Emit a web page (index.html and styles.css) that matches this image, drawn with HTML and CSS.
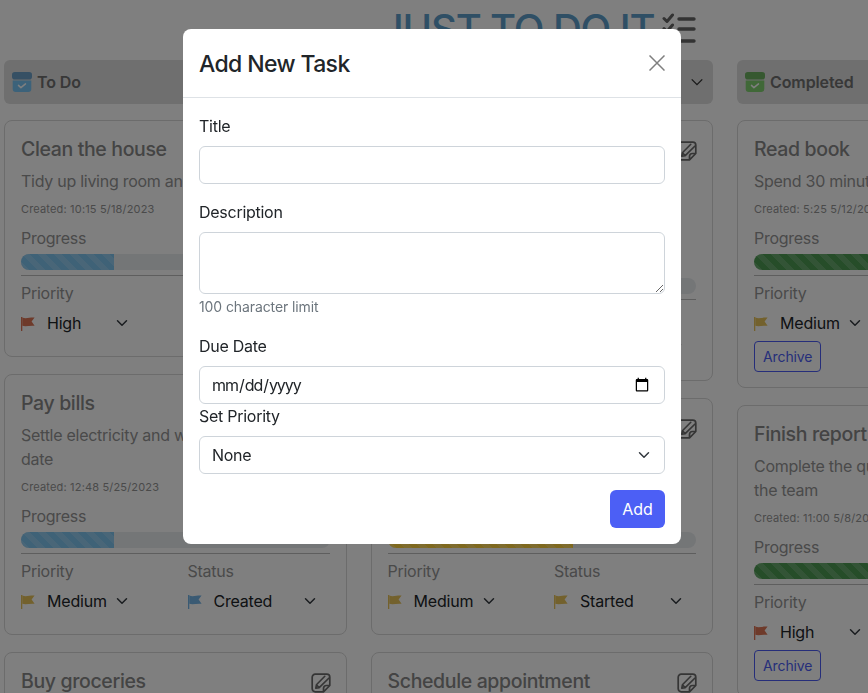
FILE: index.html
```html
<!DOCTYPE html>
<html lang="en">
<head>
<meta charset="utf-8">
<title>Just To Do It</title>
<link rel="stylesheet" href="styles.css">
</head>
<body>
<svg class="sprites" aria-hidden="true">
  <symbol id="flag" viewBox="0 0 14 14"><path d="M0 0h1.300v14H0z"/><path d="M1.300 .6C5 2 9 .2 13.600 .6L10.600 4.400l3 4.400C9 8.200 5 10 1.300 8.800z"/></symbol>
  <symbol id="edit" viewBox="0 0 20 20"><path fill="none" stroke="currentColor" stroke-width="1.700" stroke-linejoin="round" d="M12.500 18.800H4.200a3 3 0 0 1-3-3V4.200a3 3 0 0 1 3-3h11.600a3 3 0 0 1 3 3v8.300zM12.500 18.800v-3.300a3 3 0 0 1 3-3h3.300"/><path fill="none" stroke="currentColor" stroke-width="1.600" stroke-linecap="round" stroke-linejoin="round" d="M4.800 15.200l.6-3.400L13.800 3.300M4.800 15.200l3.400-.6L18 5M5.400 11.800l2.800 2.800"/></symbol>
  <symbol id="archive" viewBox="0 0 20 20"><rect x="0" y="0" width="20" height="7.500" rx="2.800" fill="currentColor"/><path d="M.7 8.500h18.600V17a3 3 0 0 1-3 3H3.700a3 3 0 0 1-3-3z"/><path fill="none" stroke="#fff" stroke-width="1.500" stroke-linecap="round" stroke-linejoin="round" d="M6.500 13.400l2.400 2.300 4.600-3.800"/></symbol>
</svg>

<main class="page">
  <header class="brand">
    <h1 class="brand-title">JUST TO DO IT</h1>
    <svg class="brand-icon" viewBox="0 0 34 30" aria-hidden="true"><path fill="none" stroke="currentColor" stroke-width="3" stroke-linecap="round" stroke-linejoin="round" d="M2 5.500l3 3 5.500-6.500M2 15.500l3 3 5.500-6.500"/><path fill="none" stroke="currentColor" stroke-width="3.400" stroke-linecap="round" d="M17 6h15M17 16h15M4 28h28"/></svg>
  </header>

  <div class="board">
    <section class="column">
      <h2 class="column-head"><svg class="head-icon icon-blue"><use href="#archive"/></svg>To Do<svg class="head-chevron" viewBox="0 0 16 16"><path d="M2 5l6 6 6-6"/></svg></h2>

      <article class="card">
        <div class="card-head"><h3 class="card-title">Clean the house</h3><svg class="edit"><use href="#edit"/></svg></div>
        <p class="card-text">Tidy up living room and kitchen</p>
        <p class="card-date">Created: 10:15 5/18/2023</p>
        <div class="progress-label">Progress</div>
        <div class="track"><div class="fill fill-blue" style="width:30%"></div></div>
        <div class="meta">
          <div class="meta-cell"><span class="meta-label">Priority</span>
            <div class="pick"><svg class="flag flag-high"><use href="#flag"/></svg><select class="pick-select"><option>None</option><option>Low</option><option>Medium</option><option selected>High</option></select></div></div>
          <div class="meta-cell"><span class="meta-label">Status</span>
            <div class="pick"><svg class="flag flag-blue"><use href="#flag"/></svg><select class="pick-select"><option selected>Created</option><option>Started</option><option>Completed</option></select></div></div>
        </div>
      </article>

      <article class="card">
        <div class="card-head"><h3 class="card-title">Pay bills</h3><svg class="edit"><use href="#edit"/></svg></div>
        <p class="card-text">Settle electricity and water bills before date</p>
        <p class="card-date">Created: 12:48 5/25/2023</p>
        <div class="progress-label">Progress</div>
        <div class="track"><div class="fill fill-blue" style="width:30%"></div></div>
        <div class="meta">
          <div class="meta-cell"><span class="meta-label">Priority</span>
            <div class="pick"><svg class="flag flag-med"><use href="#flag"/></svg><select class="pick-select"><option>None</option><option>Low</option><option selected>Medium</option><option>High</option></select></div></div>
          <div class="meta-cell"><span class="meta-label">Status</span>
            <div class="pick"><svg class="flag flag-blue"><use href="#flag"/></svg><select class="pick-select"><option selected>Created</option><option>Started</option><option>Completed</option></select></div></div>
        </div>
      </article>

      <article class="card">
        <div class="card-head"><h3 class="card-title">Buy groceries</h3><svg class="edit"><use href="#edit"/></svg></div>
      </article>
    </section>

    <section class="column">
      <h2 class="column-head"><svg class="head-icon icon-yellow"><use href="#archive"/></svg>In Progress<svg class="head-chevron" viewBox="0 0 16 16"><path d="M2 5l6 6 6-6"/></svg></h2>

      <article class="card">
        <div class="card-head"><h3 class="card-title">Walk the dog</h3><svg class="edit"><use href="#edit"/></svg></div>
        <p class="card-text">Take the dog on a long walk around the neighbourhood after work</p>
        <p class="card-date">Created: 9:30 5/20/2023</p>
        <div class="progress-label">Progress</div>
        <div class="track"><div class="fill fill-yellow" style="width:60%"></div></div>
        <div class="meta">
          <div class="meta-cell"><span class="meta-label">Priority</span>
            <div class="pick"><svg class="flag flag-med"><use href="#flag"/></svg><select class="pick-select"><option>None</option><option>Low</option><option selected>Medium</option><option>High</option></select></div></div>
          <div class="meta-cell"><span class="meta-label">Status</span>
            <div class="pick"><svg class="flag flag-med"><use href="#flag"/></svg><select class="pick-select"><option>Created</option><option selected>Started</option><option>Completed</option></select></div></div>
        </div>
      </article>

      <article class="card">
        <div class="card-head"><h3 class="card-title">Clean the garage</h3><svg class="edit"><use href="#edit"/></svg></div>
        <p class="card-text">Sort the boxes in the garage</p>
        <p class="card-date">Created: 14:05 5/22/2023</p>
        <div class="progress-label">Progress</div>
        <div class="track"><div class="fill fill-yellow" style="width:60%"></div></div>
        <div class="meta">
          <div class="meta-cell"><span class="meta-label">Priority</span>
            <div class="pick"><svg class="flag flag-med"><use href="#flag"/></svg><select class="pick-select"><option>None</option><option>Low</option><option selected>Medium</option><option>High</option></select></div></div>
          <div class="meta-cell"><span class="meta-label">Status</span>
            <div class="pick"><svg class="flag flag-med"><use href="#flag"/></svg><select class="pick-select"><option>Created</option><option selected>Started</option><option>Completed</option></select></div></div>
        </div>
      </article>

      <article class="card">
        <div class="card-head"><h3 class="card-title">Schedule appointment</h3><svg class="edit"><use href="#edit"/></svg></div>
      </article>
    </section>

    <section class="column">
      <h2 class="column-head"><svg class="head-icon icon-green"><use href="#archive"/></svg>Completed<svg class="head-chevron" viewBox="0 0 16 16"><path d="M2 5l6 6 6-6"/></svg></h2>

      <article class="card">
        <div class="card-head"><h3 class="card-title">Read book</h3><svg class="edit"><use href="#edit"/></svg></div>
        <p class="card-text">Spend 30 minutes reading a book</p>
        <p class="card-date">Created: 5:25 5/12/2023</p>
        <div class="progress-label">Progress</div>
        <div class="track"><div class="fill fill-green" style="width:100%"></div></div>
        <div class="meta">
          <div class="meta-cell"><span class="meta-label">Priority</span>
            <div class="pick"><svg class="flag flag-med"><use href="#flag"/></svg><select class="pick-select"><option>None</option><option>Low</option><option selected>Medium</option><option>High</option></select></div></div>
          <div class="meta-cell"><span class="meta-label">Status</span>
            <div class="pick"><svg class="flag flag-green"><use href="#flag"/></svg><select class="pick-select"><option>Created</option><option>Started</option><option selected>Completed</option></select></div></div>
        </div>
        <button class="archive" type="button">Archive</button>
      </article>

      <article class="card">
        <div class="card-head"><h3 class="card-title">Finish report</h3><svg class="edit"><use href="#edit"/></svg></div>
        <p class="card-text">Complete the quarterly report and send to the team</p>
        <p class="card-date">Created: 11:00 5/8/2023</p>
        <div class="progress-label">Progress</div>
        <div class="track"><div class="fill fill-green" style="width:100%"></div></div>
        <div class="meta">
          <div class="meta-cell"><span class="meta-label">Priority</span>
            <div class="pick"><svg class="flag flag-high"><use href="#flag"/></svg><select class="pick-select"><option>None</option><option>Low</option><option>Medium</option><option selected>High</option></select></div></div>
          <div class="meta-cell"><span class="meta-label">Status</span>
            <div class="pick"><svg class="flag flag-green"><use href="#flag"/></svg><select class="pick-select"><option>Created</option><option>Started</option><option selected>Completed</option></select></div></div>
        </div>
        <button class="archive" type="button">Archive</button>
      </article>
    </section>
  </div>
</main>

<div class="backdrop"></div>

<div class="modal" role="dialog" aria-modal="true" aria-labelledby="modal-title">
  <div class="modal-head">
    <h2 class="modal-title" id="modal-title">Add New Task</h2>
    <button class="close" type="button" aria-label="Close"><svg viewBox="0 0 16 16"><path d="M.5.5l15 15M15.500.5l-15 15"/></svg></button>
  </div>
  <form class="modal-body">
    <div class="field">
      <label class="field-label" for="t-title">Title</label>
      <input class="control" id="t-title" type="text">
    </div>
    <div class="field">
      <label class="field-label" for="t-desc">Description</label>
      <textarea class="control control-area" id="t-desc" rows="2"></textarea>
      <div class="hint">100 character limit</div>
    </div>
    <div class="field field-tight">
      <label class="field-label" for="t-due">Due Date</label>
      <input class="control control-date" id="t-due" type="date">
    </div>
    <div class="field">
      <label class="field-label" for="t-prio">Set Priority</label>
      <select class="control control-select" id="t-prio"><option>None</option><option>Low</option><option>Medium</option><option>High</option></select>
    </div>
    <div class="actions"><button class="add" type="button">Add</button></div>
  </form>
</div>
</body>
</html>
```

FILE: styles.css
```css
* { box-sizing: border-box; }

html, body {
  margin: 0;
  height: 693px;
  overflow: hidden;
  background: #fff;
  font-family: Inter, "Liberation Sans", sans-serif;
  font-size: 16px;
  line-height: 24px;
  letter-spacing: -.27px;
  color: #212529;
}

.sprites { display: none; }

.page { width: 868px; height: 693px; overflow: hidden; }

.brand {
  display: flex;
  justify-content: center;
  align-items: flex-start;
  gap: 8px;
  width: 1077px;
  height: 60px;
  padding-top: 5px;
  color: #5e9ecb;
}
.brand-title {
  margin: 0;
  font-size: 40px;
  line-height: 48px;
  font-weight: 500;
  letter-spacing: -1.150px;
  white-space: nowrap;
}
.brand-icon { width: 34px; height: 30px; margin-top: 8px; color: #666; flex: none; }

.board { display: flex; gap: 24px; padding-left: 4px; width: 1100px; }
.column { width: 342.500px; flex: none; }

.column-head {
  display: flex;
  align-items: center;
  height: 44px;
  margin: 0 0 16px;
  padding: 0 8px;
  border-radius: 6px;
  background: #dedede;
  font-size: 16px;
  font-weight: 600;
  letter-spacing: -.1px;
  color: #707070;
}
.head-icon { width: 20px; height: 20px; margin-right: 5px; flex: none; }
.head-chevron {
  width: 14px; height: 14px; margin-left: auto; margin-right: 1px;
  fill: none; stroke: #333; stroke-width: 1.600;
}
.icon-blue { fill: #78c4f4; color: #6ca0c8; }
.icon-yellow { fill: #ffdd60; color: #d8b850; }
.icon-green { fill: #80d070; color: #6cb060; }

.card {
  border: 1px solid #d8d8d8;
  border-radius: 8px;
  padding: 16px 16px 14px;
  margin-bottom: 17px;
}
.card-head { display: flex; justify-content: space-between; align-items: flex-start; }
.card-title { margin: 0 0 8px; font-size: 19.500px; line-height: 24px; font-weight: 500; letter-spacing: -.36px; color: #888; }
.edit { width: 20px; height: 20px; margin: 4px -1px 0 0; flex: none; color: #6a6a6a; }
.card-text { margin: 0 0 8px; color: #949494; }
.card-date { margin: 0 0 9px; font-size: 11px; line-height: 16px; color: #949494; letter-spacing: .17px; }
.progress-label { color: #949494; line-height: 24px; margin-bottom: 4px; }

.track { height: 16px; border-radius: 8px; background: #e9ecef; overflow: hidden; }
.fill {
  height: 100%;
  background-size: 16px 16px;
  background-image: linear-gradient(45deg, rgba(255,255,255,.15) 25%, transparent 25%, transparent 50%, rgba(255,255,255,.15) 50%, rgba(255,255,255,.15) 75%, transparent 75%, transparent);
}
.fill-blue { background-color: #7fc4ee; }
.fill-yellow { background-color: #ffd23f; }
.fill-green { background-color: #4c9a52; }

.meta {
  display: grid;
  grid-template-columns: 166.500px 1fr;
  border-top: 1px solid #bcbcbc;
  margin-top: 5px;
  padding-top: 5px;
}
.meta-cell { display: flex; flex-direction: column; align-items: flex-start; }
.meta-label { color: #949494; line-height: 24px; }

.pick { position: relative; display: flex; align-items: center; height: 38px; margin-top: -1px; }
.flag { position: absolute; left: 0; top: 12.500px; width: 14px; height: 14px; pointer-events: none; }
.flag-high { fill: #dc7454; }
.flag-med { fill: #e6c25a; }
.flag-blue { fill: #74b4e6; }
.flag-green { fill: #80d070; }

.pick-select {
  appearance: none;
  border: 0;
  background: transparent url("data:image/svg+xml,%3Csvg xmlns='http://www.w3.org/2000/svg' viewBox='0 0 16 16'%3E%3Cpath fill='none' stroke='%23343a40' stroke-linecap='round' stroke-linejoin='round' stroke-width='2' d='M2 5l6 6 6-6'/%3E%3C/svg%3E") no-repeat right 12px center / 16px 12px;
  font: inherit;
  letter-spacing: -.2px;
  color: #212529;
  height: 38px;
  padding: 0 35px 0 26px;
}

.archive {
  display: block;
  height: 31px;
  margin: -1px 0 1px;
  padding: 0 8px;
  border: 1px solid #4c5df5;
  border-radius: 4px;
  background: transparent;
  font: inherit;
  font-size: 14px;
  letter-spacing: -.1px;
  color: #4c5df5;
}

.backdrop { position: fixed; inset: 0; background: rgba(0,0,0,.5); }

.modal {
  position: fixed;
  left: 183px;
  top: 29px;
  width: 498px;
  height: 515px;
  background: #fff;
  border-radius: 8px;
  display: flex;
  flex-direction: column;
}
.modal-head {
  display: flex;
  align-items: center;
  justify-content: space-between;
  height: 69px;
  padding: 0 16px;
  border-bottom: 1px solid #dee2e6;
}
.modal-title { margin: 3px 0 0; font-size: 23px; line-height: 35px; font-weight: 500; letter-spacing: -.62px; color: #212529; }
.close { border: 0; background: none; padding: 0; width: 16px; height: 16px; display: flex; }
.close svg { width: 16px; height: 16px; stroke: #7f7f7f; stroke-width: 1.500; fill: none; }

.modal-body { padding: 16px; display: flex; flex-direction: column; }
.field { display: flex; flex-direction: column; margin-bottom: 16px; }
.field-tight { margin-bottom: 0; }
.field-label { line-height: 24px; margin-bottom: 8px; }
.control {
  display: block;
  width: 100%;
  height: 38px;
  padding: 6px 12px;
  border: 1px solid #ced4da;
  border-radius: 6px;
  background: #fff;
  font: inherit;
  letter-spacing: -.3px;
  color: #212529;
}
.control-area { height: 62px; resize: vertical; }
.control-date { padding-left: 11px; letter-spacing: -1.050px; }
.control-select {
  appearance: none;
  padding-right: 36px;
  background: #fff url("data:image/svg+xml,%3Csvg xmlns='http://www.w3.org/2000/svg' viewBox='0 0 16 16'%3E%3Cpath fill='none' stroke='%23343a40' stroke-linecap='round' stroke-linejoin='round' stroke-width='2' d='M2 5l6 6 6-6'/%3E%3C/svg%3E") no-repeat right 12px center / 16px 12px;
}
.hint { font-size: 14px; line-height: 22px; letter-spacing: -.1px; color: #6c757d; margin-top: 2px; }
.actions { display: flex; justify-content: flex-end; }
.add {
  width: 55px;
  height: 38px;
  border: 0;
  border-radius: 6px;
  background: #4c5ff5;
  color: #fff;
  font: inherit;
}
```
